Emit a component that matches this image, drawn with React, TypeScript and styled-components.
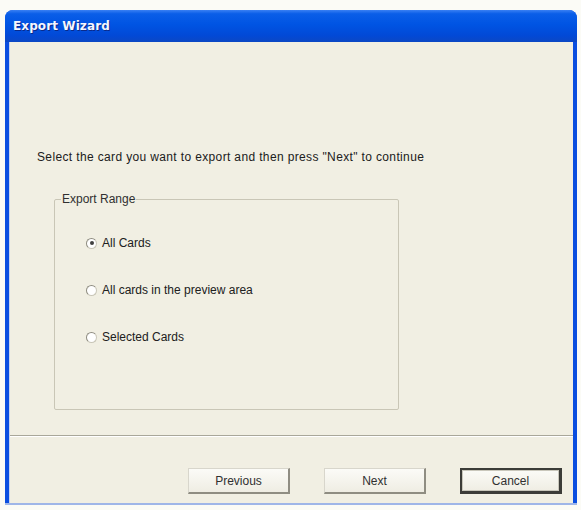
import React, { useState } from "react";
import styled, { createGlobalStyle } from "styled-components";

const GlobalStyle = createGlobalStyle`
  html, body {
    margin: 0;
    padding: 0;
    background: #fbfbf6;
  }
  body {
    font-family: "Liberation Sans", Arial, sans-serif;
  }
`;

const Window = styled.div`
  margin: 10px 0 0 5px;
  width: 572px;
  height: 495px;
  display: flex;
  flex-direction: column;
  border-radius: 8px 8px 0 0;
  overflow: hidden;
  background: #0a4ee0;
  box-sizing: border-box;
  border-bottom: 2px solid #9fb6e8;
`;

const TitleBar = styled.div`
  height: 32px;
  flex: none;
  display: flex;
  align-items: center;
  padding-left: 8px;
  background: linear-gradient(
    to bottom,
    #3a80f3 0%,
    #0a5ee8 12%,
    #0054e3 45%,
    #0249d6 80%,
    #0c47c4 100%
  );
  color: #f4f6ff;
  font-family: "DejaVu Sans", Tahoma, sans-serif;
  font-weight: bold;
  font-size: 12px;
  letter-spacing: 0.1px;
  text-shadow: 1px 1px 0 #0a2a8a;
`;

const Body = styled.div`
  flex: 1;
  display: flex;
  flex-direction: column;
  margin: 0 4px;
  background: #f1efe3;
  border-left: 1px solid #c7d3ee;
  padding: 108px 0 0 0;
  color: #202020;
  font-size: 12px;
`;

const Instruction = styled.div`
  padding-left: 27px;
  line-height: 14px;
  letter-spacing: 0.36px;
`;

const Group = styled.fieldset`
  margin: 28px 0 0 44px;
  width: 345px;
  height: 218px;
  box-sizing: border-box;
  border: 1px solid #c9c6b6;
  border-radius: 2px;
  padding: 0;

  legend {
    padding: 0 1px;
    margin-left: 6px;
    line-height: 14px;
    color: #303030;
  }
`;

const Options = styled.div`
  display: flex;
  flex-direction: column;
  gap: 33px;
  padding: 30px 0 0 31px;
`;

const RadioRow = styled.label`
  display: flex;
  align-items: center;
  gap: 5px;
  height: 14px;
  line-height: 14px;
  cursor: default;
`;

const RadioDot = styled.span<{ $checked: boolean }>`
  width: 11px;
  height: 11px;
  border-radius: 50%;
  box-sizing: border-box;
  border: 1px solid #c9c6b8;
  border-left-color: #8e8c80;
  border-top-color: #8e8c80;
  background: #ffffff;
  display: flex;
  align-items: center;
  justify-content: center;

  &::after {
    content: "";
    width: 4px;
    height: 4px;
    border-radius: 50%;
    background: ${(p) => (p.$checked ? "#404040" : "transparent")};
  }
`;

const Separator = styled.div`
  margin: 25px 0 0 0;
  height: 1px;
  background: #a9a79a;
  border-bottom: 1px solid #ffffff;
`;

const ButtonRow = styled.div`
  display: flex;
  justify-content: flex-end;
  gap: 34px;
  padding: 31px 11px 0 0;
`;

const Button = styled.button<{ $default?: boolean }>`
  width: 102px;
  height: 26px;
  font-family: "Liberation Sans", Arial, sans-serif;
  font-size: 12px;
  color: #303030;
  background: linear-gradient(to bottom, #fbfbf7, #efede3);
  border: 1px solid #d8d6cc;
  border-right: 2px solid #8f8d82;
  border-bottom: 2px solid #8f8d82;
  box-sizing: border-box;
  ${(p) =>
    p.$default &&
    `
    border: 2px solid #3c3c38;
    border-right-width: 3px;
    border-bottom-width: 3px;
    box-shadow: inset 0 0 0 1px #c9c7bb;
  `}
`;

const choices = ["All Cards", "All cards in the preview area", "Selected Cards"];

export default function App() {
  const [picked, setPicked] = useState(0);

  return (
    <>
      <GlobalStyle />
      <Window>
        <TitleBar>Export Wizard</TitleBar>
        <Body>
          <Instruction>
            Select the card you want to export and then press "Next" to continue
          </Instruction>
          <Group>
            <legend>Export Range</legend>
            <Options>
              {choices.map((c, i) => (
                <RadioRow key={c} onClick={() => setPicked(i)}>
                  <RadioDot $checked={picked === i} />
                  {c}
                </RadioRow>
              ))}
            </Options>
          </Group>
          <Separator />
          <ButtonRow>
            <Button>Previous</Button>
            <Button>Next</Button>
            <Button $default>Cancel</Button>
          </ButtonRow>
        </Body>
      </Window>
    </>
  );
}
